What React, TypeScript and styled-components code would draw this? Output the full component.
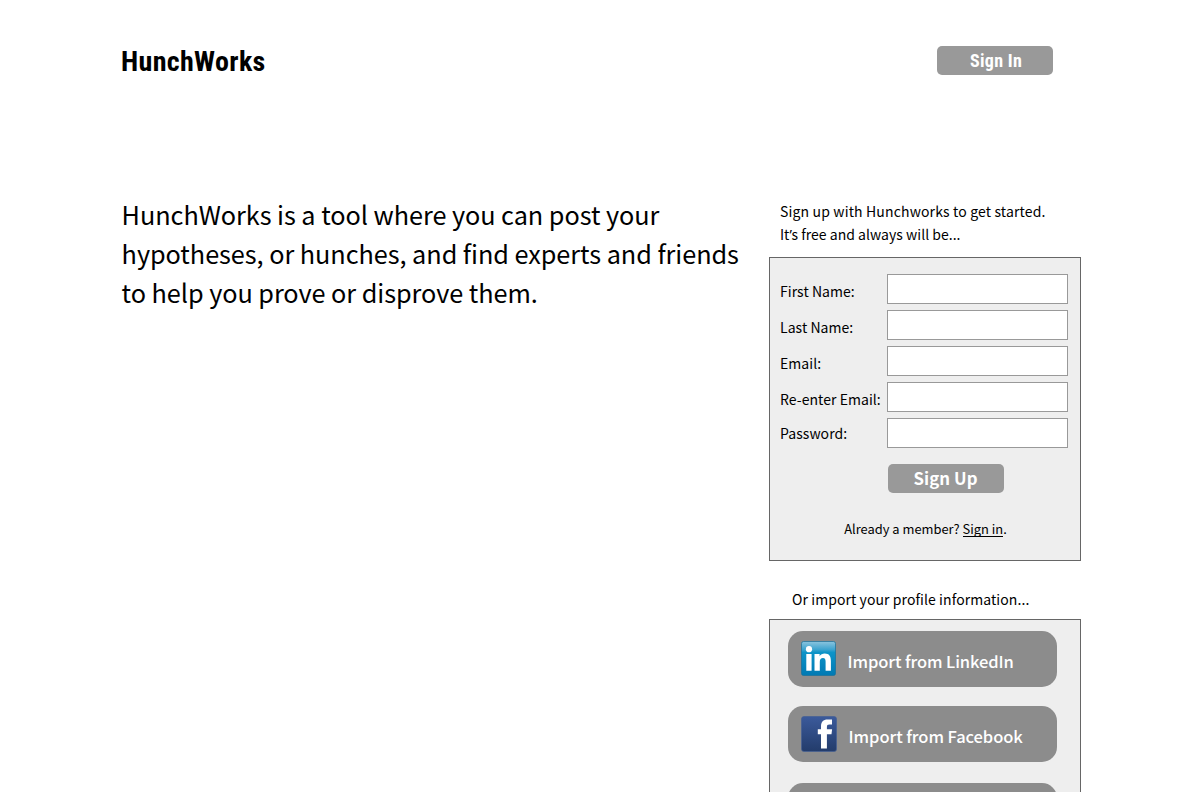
import React from 'react';
import styled, { createGlobalStyle } from 'styled-components';

const humanist = `"Noto Sans CJK SC", "Noto Sans", sans-serif`;
const condensed = `"Roboto Condensed", Roboto, sans-serif`;

const GlobalStyle = createGlobalStyle`
  *, *::before, *::after { box-sizing: border-box; }
  body {
    margin: 0;
    background: #fff;
    color: #000;
    font-family: ${humanist};
  }
`;

const Page = styled.div`
  height: 100vh;
  overflow: hidden;
`;

const Header = styled.header`
  display: flex;
  justify-content: space-between;
  align-items: flex-start;
  padding: 46px 147px 0 121px;
  height: 195px;
`;

const Logo = styled.h1`
  margin: 0;
  padding-top: 1px;
  font: 700 28px/30px ${condensed};
  letter-spacing: 0.34px;
`;

const Button = styled.button<{ $narrow?: boolean }>`
  display: block;
  width: 116px;
  height: 29px;
  padding: ${(p) => (p.$narrow ? '1px 0 0 2px' : '0 1px 1px 0')};
  border: 0;
  border-radius: 5px;
  background: #999;
  color: #fff;
  text-align: center;
  font: ${(p) => (p.$narrow ? `700 18px/28px ${condensed}` : `700 16.8px/27px ${humanist}`)};
  letter-spacing: ${(p) => (p.$narrow ? '0.3px' : '0.1px')};
`;

const Columns = styled.main`
  display: flex;
  justify-content: space-between;
  padding: 0 119px 0 121.6px;
`;

const Intro = styled.p`
  margin: 0;
  width: 640px;
  font-size: 25.25px;
  line-height: 39px;
  letter-spacing: -0.045px;
  white-space: nowrap;
`;

const Sidebar = styled.aside`
  width: 312px;
  padding-top: 5px;
`;

const Lead = styled.p`
  margin: 0;
  padding: 0 0 11px 11px;
  font-size: 14px;
  line-height: 23px;
  letter-spacing: 0.15px;
  white-space: nowrap;
`;

const Tagline = styled.span`
  letter-spacing: 0.02px;
`;

const Apostrophe = styled.span`
  font-family: "Noto Sans", sans-serif;
  letter-spacing: -0.4px;
`;

const Panel = styled.section`
  border: 1px solid #666;
  background: #eee;
`;

const SignUpForm = styled(Panel)`
  display: flex;
  flex-direction: column;
  height: 304px;
  padding: 16px 12px 0 10px;
`;

const Field = styled.label<{ $raise?: number }>`
  display: flex;
  justify-content: space-between;
  height: 36px;
  font-size: 14px;
  line-height: 20px;
  letter-spacing: 0.05px;
  white-space: nowrap;

  span { padding-top: ${(p) => 7 - (p.$raise ?? 0)}px; }
`;

const Input = styled.input`
  width: 181px;
  height: 30px;
  padding: 0 6px;
  border: 1px solid #999;
  border-radius: 0;
  background: #fff;
  font: 14px ${humanist};
`;

const SubmitRow = styled.div`
  padding: 10px 0 0 108px;
`;

const Member = styled.p`
  margin: 26px 0 0;
  padding-left: 3px;
  text-align: center;
  font-size: 12.9px;
  line-height: 20px;
`;

const SignInLink = styled.a`
  display: inline-block;
  height: 18px;
  line-height: 20px;
  border-bottom: 1px solid #000;
`;

const ImportLead = styled.p`
  margin: 0;
  padding: 27px 0 8px 23px;
  font-size: 14px;
  line-height: 23px;
  letter-spacing: 0.08px;
`;

const ImportPanel = styled(Panel)`
  display: flex;
  flex-direction: column;
  gap: 19px;
  height: 260px;
  padding: 11px 23px 0 18px;
`;

const ImportButton = styled.button<{ $tracking?: number }>`
  display: flex;
  flex: none;
  align-items: flex-start;
  gap: 11.6px;
  width: 269px;
  height: 56px;
  padding: 10px 0 0 13px;
  border: 0;
  border-radius: 15px;
  background: #8c8c8c;
  color: #fff;
  font: 500 16.5px/24px ${humanist};
  letter-spacing: ${(p) => p.$tracking ?? 0}px;
  white-space: nowrap;

  &:nth-child(3) { margin-top: 2px; }
  svg { flex: none; display: block; }
  span { padding-top: 8px; }
`;

const LinkedInIcon = () => (
  <svg width="35" height="35" viewBox="0 0 35 35">
    <defs>
      <linearGradient id="li" x1="0" y1="0" x2="0" y2="1">
        <stop offset="0" stopColor="#8cc4de" />
        <stop offset="0.24" stopColor="#3ba3cf" />
        <stop offset="0.32" stopColor="#0d94c8" />
        <stop offset="1" stopColor="#0079b3" />
      </linearGradient>
    </defs>
    <rect x="0.5" y="0.5" width="34" height="34" rx="2" fill="url(#li)" stroke="#17719b" strokeOpacity="0.7" />
    <circle cx="8" cy="8.2" r="3.1" fill="#fff" />
    <path
      fill="#fff"
      d="M5.3 13h5.3v16.7H5.3zM13.5 13h5.1v2.3c1-1.7 2.8-2.7 5.1-2.7 4.5 0 6.2 2.8 6.2 7.3v9.8h-5.3v-8.9c0-2.4-.6-3.9-2.6-3.9-2.2 0-3.2 1.5-3.2 3.9v8.9h-5.3z"
    />
  </svg>
);

const FacebookIcon = () => (
  <svg width="36" height="36" viewBox="0 0 36 36">
    <defs>
      <linearGradient id="fb" x1="0" y1="0" x2="0" y2="1">
        <stop offset="0" stopColor="#3b5a9b" />
        <stop offset="1" stopColor="#233c6b" />
      </linearGradient>
    </defs>
    <rect x="0.5" y="0.5" width="35" height="35" rx="2.5" fill="url(#fb)" stroke="#455f94" strokeOpacity="0.7" />
    <path
      fill="#fff"
      d="M20 32.5V18.3h-3.2v-5.1H20v-2.7c0-4.7 2.2-7 6.6-7H31v5.1h-2.6c-2 0-2.5.8-2.5 2.5v2.1h5.2l-.6 5.1h-4.6v14.2z"
    />
  </svg>
);

export default function App() {
  return (
    <Page>
      <GlobalStyle />
      <Header>
        <Logo>HunchWorks</Logo>
        <Button $narrow>Sign In</Button>
      </Header>
      <Columns>
        <Intro>
          HunchWorks is a tool where you can post your
          <br />
          hypotheses, or hunches, and find experts and friends
          <br />
          to help you prove or disprove them.
        </Intro>
        <Sidebar>
          <Lead>
            Sign up with Hunchworks to get started.
            <br />
            <Tagline>It<Apostrophe>’</Apostrophe>s free and always will be...</Tagline>
          </Lead>
          <SignUpForm>
            <Field><span>First Name:</span><Input /></Field>
            <Field><span>Last Name:</span><Input /></Field>
            <Field><span>Email:</span><Input /></Field>
            <Field><span>Re-enter Email:</span><Input /></Field>
            <Field $raise={2}><span>Password:</span><Input type="password" /></Field>
            <SubmitRow><Button>Sign Up</Button></SubmitRow>
            <Member>Already a member? <SignInLink>Sign in</SignInLink>.</Member>
          </SignUpForm>
          <ImportLead>Or import your profile information...</ImportLead>
          <ImportPanel>
            <ImportButton $tracking={-0.12}>
              <LinkedInIcon /><span>Import from LinkedIn</span>
            </ImportButton>
            <ImportButton $tracking={-0.08}>
              <FacebookIcon /><span>Import from Facebook</span>
            </ImportButton>
            <ImportButton />
          </ImportPanel>
        </Sidebar>
      </Columns>
    </Page>
  );
}
